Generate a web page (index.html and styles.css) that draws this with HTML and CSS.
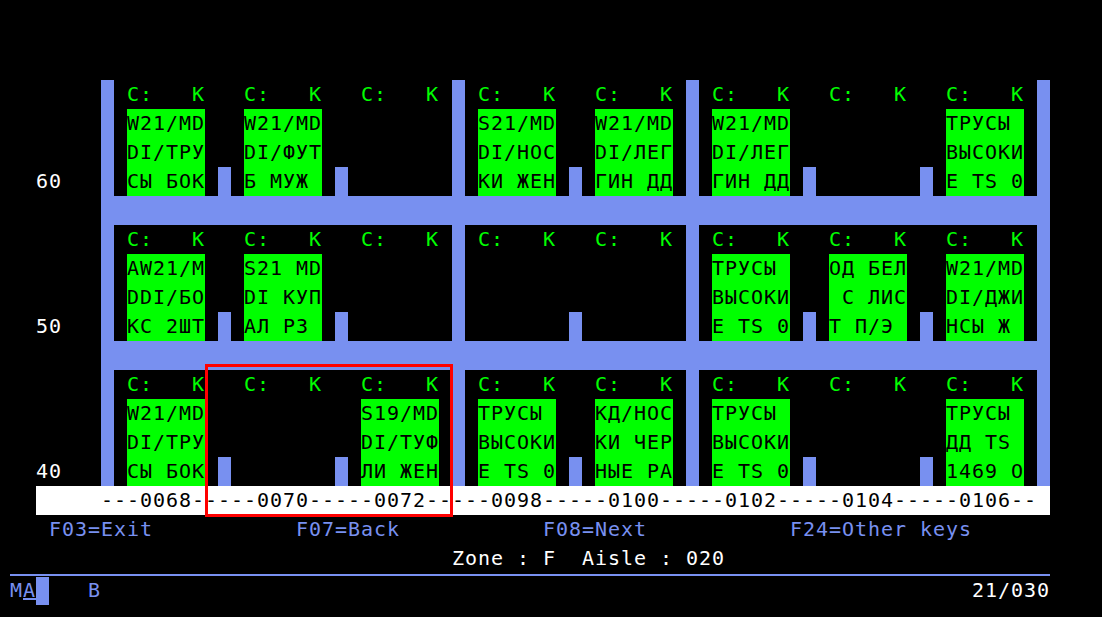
FILE: index.html
```html
<!DOCTYPE html>
<html lang="ru">
<head>
<meta charset="utf-8">
<title>Aisle view</title>
<link rel="stylesheet" href="styles.css">
</head>
<body>
<div class="screen">
  <div class="floor">
    <div class="level-nums">
      <div class="level-num">60</div>
      <div class="level-num">50</div>
      <div class="level-num">40</div>
    </div>
    <div class="rack">
      <!-- level 60 -->
      <div class="level">
        <div class="section">
          <div class="bin"><div class="bin-head">C:   K</div><div class="bin-label">W21/MD
DI/ТРУ
СЫ БОК</div></div>
          <div class="divider"></div>
          <div class="bin"><div class="bin-head">C:   K</div><div class="bin-label">W21/MD
DI/ФУТ
Б МУЖ </div></div>
          <div class="divider"></div>
          <div class="bin"><div class="bin-head">C:   K</div></div>
        </div>
        <div class="section">
          <div class="bin"><div class="bin-head">C:   K</div><div class="bin-label">S21/MD
DI/НОС
КИ ЖЕН</div></div>
          <div class="divider"></div>
          <div class="bin"><div class="bin-head">C:   K</div><div class="bin-label">W21/MD
DI/ЛЕГ
ГИН ДД</div></div>
        </div>
        <div class="section">
          <div class="bin"><div class="bin-head">C:   K</div><div class="bin-label">W21/MD
DI/ЛЕГ
ГИН ДД</div></div>
          <div class="divider"></div>
          <div class="bin"><div class="bin-head">C:   K</div></div>
          <div class="divider"></div>
          <div class="bin"><div class="bin-head">C:   K</div><div class="bin-label">ТРУСЫ 
ВЫСОКИ
Е TS 0</div></div>
        </div>
      </div>
      <!-- level 50 -->
      <div class="level">
        <div class="section">
          <div class="bin"><div class="bin-head">C:   K</div><div class="bin-label">AW21/M
DDI/БО
КС 2ШТ</div></div>
          <div class="divider"></div>
          <div class="bin"><div class="bin-head">C:   K</div><div class="bin-label">S21 MD
DI КУП
АЛ РЗ </div></div>
          <div class="divider"></div>
          <div class="bin"><div class="bin-head">C:   K</div></div>
        </div>
        <div class="section">
          <div class="bin"><div class="bin-head">C:   K</div></div>
          <div class="divider"></div>
          <div class="bin"><div class="bin-head">C:   K</div></div>
        </div>
        <div class="section">
          <div class="bin"><div class="bin-head">C:   K</div><div class="bin-label">ТРУСЫ 
ВЫСОКИ
Е TS 0</div></div>
          <div class="divider"></div>
          <div class="bin"><div class="bin-head">C:   K</div><div class="bin-label">ОД БЕЛ
 С ЛИС
Т П/Э </div></div>
          <div class="divider"></div>
          <div class="bin"><div class="bin-head">C:   K</div><div class="bin-label">W21/MD
DI/ДЖИ
НСЫ Ж </div></div>
        </div>
      </div>
      <!-- level 40 -->
      <div class="level">
        <div class="section">
          <div class="bin"><div class="bin-head">C:   K</div><div class="bin-label">W21/MD
DI/ТРУ
СЫ БОК</div></div>
          <div class="divider"></div>
          <div class="bin"><div class="bin-head">C:   K</div></div>
          <div class="divider"></div>
          <div class="bin"><div class="bin-head">C:   K</div><div class="bin-label">S19/MD
DI/ТУФ
ЛИ ЖЕН</div></div>
        </div>
        <div class="section">
          <div class="bin"><div class="bin-head">C:   K</div><div class="bin-label">ТРУСЫ 
ВЫСОКИ
Е TS 0</div></div>
          <div class="divider"></div>
          <div class="bin"><div class="bin-head">C:   K</div><div class="bin-label">КД/НОС
КИ ЧЕР
НЫЕ РА</div></div>
        </div>
        <div class="section">
          <div class="bin"><div class="bin-head">C:   K</div><div class="bin-label">ТРУСЫ 
ВЫСОКИ
Е TS 0</div></div>
          <div class="divider"></div>
          <div class="bin"><div class="bin-head">C:   K</div></div>
          <div class="divider"></div>
          <div class="bin"><div class="bin-head">C:   K</div><div class="bin-label">ТРУСЫ 
ДД TS 
1469 О</div></div>
        </div>
      </div>
    </div>
  </div>
  <div class="ruler">---0068-----0070-----0072-----0098-----0100-----0102-----0104-----0106--</div>
  <div class="fkeys">
    <span>F03=Exit</span>
    <span>F07=Back</span>
    <span>F08=Next</span>
    <span>F24=Other keys</span>
  </div>
  <div class="zone">Zone : F  Aisle : 020</div>
  <div class="cmdline">
    <span class="field">M<span class="field-input">A</span></span><span class="cursor"></span>
    <span class="field-b">B</span>
    <span class="pos">21/030</span>
  </div>
  <div class="selection"></div>
</div>
</body>
</html>
```

FILE: styles.css
```css
html, body {
  margin: 0;
  background: #000;
}

.screen {
  position: relative;
  width: 1040px;
  padding: 80px 0 0 10px;
  font-family: "DejaVu Sans Mono", "Liberation Mono", monospace;
  font-size: 20px;
  line-height: 29px;
  letter-spacing: 0.96px;
  color: #fff;
}

.floor {
  display: flex;
}

.level-nums {
  width: 91px;
  display: flex;
  flex-direction: column;
  gap: 29px;
}

.level-num {
  height: 116px;
  box-sizing: border-box;
  padding-left: 26px;
  display: flex;
  align-items: flex-end;
  color: #fff;
}

.rack {
  width: 949px;
  box-sizing: border-box;
  padding: 0 13px;
  background: #7890f0;
  display: flex;
  flex-direction: column;
  gap: 29px;
}

.level {
  height: 116px;
  display: flex;
  gap: 13px;
}

.section {
  display: flex;
  background: #000;
}

.bin {
  width: 104px;
  box-sizing: border-box;
  padding: 0 13px;
}

.bin-head {
  height: 29px;
  color: #00ff00;
  white-space: pre;
}

.bin-label {
  height: 87px;
  background: #00ff00;
  color: #000;
  white-space: pre;
}

.divider {
  width: 13px;
  height: 29px;
  align-self: flex-end;
  background: #7890f0;
}

.ruler {
  width: 1014px;
  height: 29px;
  box-sizing: border-box;
  margin-left: 26px;
  padding-left: 65px;
  background: #fff;
  color: #000;
  white-space: pre;
}

.fkeys {
  height: 29px;
  display: grid;
  grid-template-columns: repeat(4, 247px);
  padding-left: 39px;
  color: #7890f0;
  white-space: pre;
}

.zone {
  height: 29px;
  padding-left: 442px;
  color: #fff;
  white-space: pre;
}

.cmdline {
  height: 29px;
  margin-top: 1px;
  border-top: 2px solid #7890f0;
  display: flex;
  color: #7890f0;
}

.field-input {
  text-decoration: underline;
  text-decoration-color: #7890f0;
  text-underline-offset: 1px;
}

.cursor {
  width: 13px;
  height: 29px;
  margin-top: 1px;
  background: #7890f0;
}

.field-b {
  margin-left: 39px;
}

.pos {
  margin-left: auto;
  color: #fff;
}

.selection {
  position: absolute;
  left: 205px;
  top: 364px;
  width: 248px;
  height: 153px;
  box-sizing: border-box;
  border: 3px solid #ff0000;
}
```
